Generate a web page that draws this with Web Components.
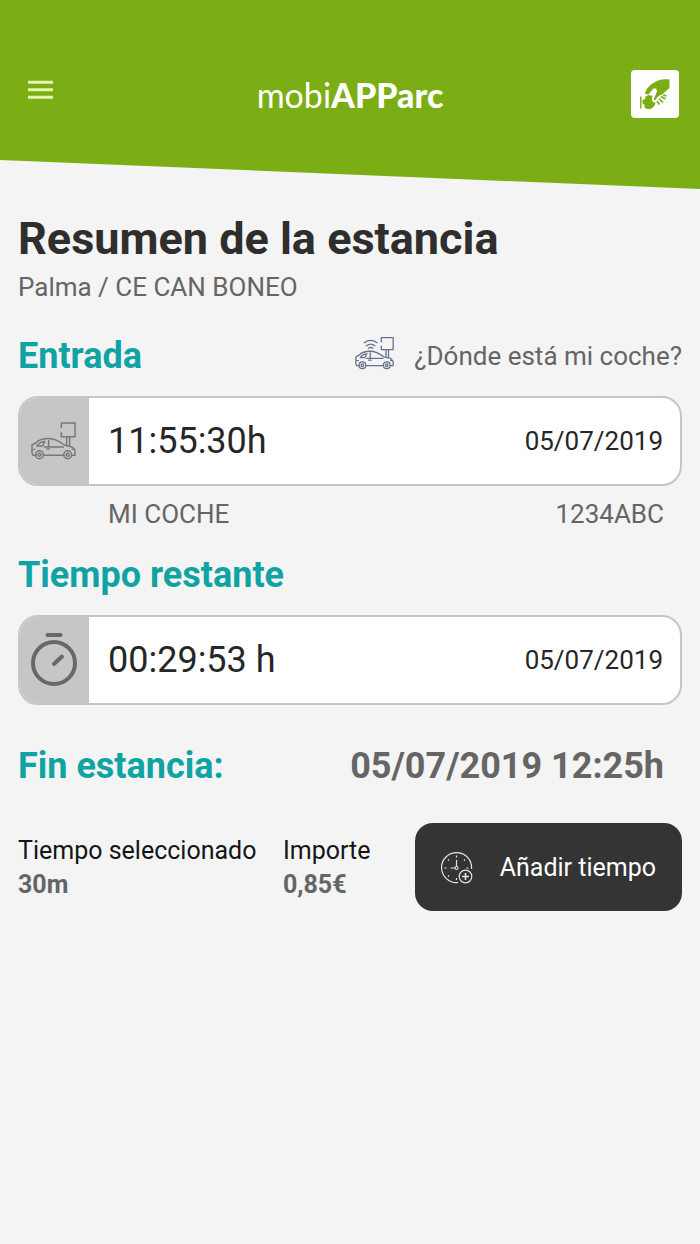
<!DOCTYPE html>
<html lang="es">
<head>
<meta charset="utf-8">
<meta name="viewport" content="width=device-width, initial-scale=1">
<title>mobiAPParc</title>
<style>
html { background: #f4f4f4; }
body { margin: 0; min-height: 100vh; background: #f4f4f4; font-family: Roboto, "Noto Sans", sans-serif; color: #2b2b2b; }
</style>
</head>
<body>
<parking-summary></parking-summary>

<template id="app-header">
<style>
:host { display: block; }
header { box-sizing: border-box; height: 189px; padding: 70px 21px 0 28px; display: grid; grid-template-columns: 1fr auto 1fr; align-items: start; background: #7bae14; clip-path: polygon(0 0, 100% 0, 100% 100%, 0 160px); }
button { border: 0; padding: 0; background: none; display: block; justify-self: start; }
.menu { padding: 10px 0; }
.op { justify-self: end; width: 48px; height: 48px; border-radius: 4px; background: #fff; }
svg { display: block; }
.logo { font: 400 34px/50px Lato, "Open Sans", sans-serif; color: #fff; margin-right: 7px; }
.logo b { font-weight: 900; }
</style>
<header>
  <button class="menu" aria-label="Menú"><svg width="25" height="20"><path d="M0 2.2h25M0 9.7h25M0 17.2h25" stroke="#e4f8b4" stroke-width="3"/></svg></button>
  <div class="logo">mobi<b>APParc</b></div>
  <button class="op" aria-label="Operador"><svg width="48" height="48" viewBox="0 0 48 48">
    <path d="M14 24C15 18 19 15 24 12C29 9 33 9 38.500 9.500V18L31 24.500C28 25 26 27 25 29.500C24 31 22.500 30 23 28.500L26 21.500C26 18.500 24 17.500 22 19L17.500 24.500Z" fill="#7bae14"/>
    <path d="M14.500 26.500C17 24.500 20 25 21.500 26C20 29.500 21 32 24.500 33C23 39 17 40.500 13.500 37.500V35L11.500 33.500V30L14 29Z" fill="#7bae14"/>
    <path d="M9.800 26.500V38.500" stroke="#7bae14" stroke-width="1.500"/>
    <path d="M26 31L28.500 34.500M28 28.500L32 32.500M30 26.500L34.500 29M32 25L35.500 26" stroke="#7bae14" stroke-width="1.700" fill="none"/>
  </svg></button>
</header>
</template>

<template id="car-icon">
<style>
:host { display: block; color: #777; }
svg { display: block; width: 100%; }
.wifi { display: none; }
:host([wifi]) .wifi { display: inline; }
</style>
<svg viewBox="0 0 46 40" fill="none" stroke="currentColor" stroke-width="1.500" stroke-linejoin="round" stroke-linecap="round" aria-hidden="true">
  <path d="M31 7V2H45V16H31V12M36.500 16V24M39.500 16V25"/>
  <path d="M5 35H2L1 33V24.500L5 22.500C8 19 12 18 18 18C24 18 28 20 34 24.500L42 26.500L45 30V35H42M12.500 35H33.500"/>
  <path d="M6 25.500H12L14 21C10 21 8 23 6 25.500ZM18 20V26.500H33M18 26.500H14M16 28.500H19M2 29H4M42 29H44"/>
  <circle cx="8.700" cy="34.500" r="4"/><circle cx="8.700" cy="34.500" r="1.500"/>
  <circle cx="37.500" cy="34.500" r="4"/><circle cx="37.500" cy="34.500" r="1.500"/>
  <path class="wifi" d="M11 8Q18.500 2.500 26 8M13.500 11.500Q18.500 7.500 23.500 11.500M16 14.500Q18.500 12.500 21 14.500"/>
</svg>
</template>

<template id="time-card">
<style>
:host { display: block; }
.card { box-sizing: border-box; min-height: 90px; display: flex; border: 2px solid #c6c6c6; border-radius: 20px; background: #fff; overflow: hidden; }
.icon { box-sizing: border-box; width: 69px; padding-right: 2px; background: #c6c6c6; display: flex; align-items: center; justify-content: center; }
.body { flex: 1; display: flex; align-items: center; justify-content: space-between; padding: 0 17px 0 19px; }
.time { font-size: 36px; line-height: 44px; color: #262626; }
.date { font-size: 26px; line-height: 32px; color: #262626; }
</style>
<div class="card"><div class="icon"><slot name="icon"></slot></div>
<div class="body"><span class="time"><slot name="time"></slot></span><span class="date"><slot name="date"></slot></span></div></div>
</template>

<template id="section-title">
<style>
:host { display: block; }
h2 { margin: 0; font-size: 36px; line-height: 40px; font-weight: 700; color: #0fa3a3; }
</style>
<h2><slot></slot></h2>
</template>

<template id="add-time">
<style>
:host { display: block; }
button { box-sizing: border-box; width: 100%; min-height: 88px; border: 0; border-radius: 18px; padding: 2px 26px 0; background: #343434; color: #fff; font: 400 25px/32px Roboto, sans-serif; display: flex; align-items: center; justify-content: space-between; }
svg { display: block; }
</style>
<button><svg width="32" height="32" viewBox="0 0 32 32" fill="none" stroke="#e4e4e4" stroke-width="1.200" aria-hidden="true">
  <path d="M17 30.500A15 15 0 1 1 30.500 17"/>
  <path d="M15.500 8V14.500M9.500 16H14" /><circle cx="15.500" cy="16" r="1.500"/>
  <path d="M15.500 3.500V5.500M3.500 16H5.500M25.500 16H27.500M15.500 26V28M7 7.500L8 8.500M24 7.500L23 8.500M7 24.500L8 23.500"/>
  <circle cx="24.500" cy="24.500" r="6.300"/><path d="M24.500 21V28M21 24.500H28" stroke-width="1.600"/>
</svg><slot></slot></button>
</template>

<template id="parking-summary">
<style>
:host { display: block; }
main { padding: 24px 18px 24px; }
h1 { margin: 0; font-size: 45px; line-height: 52px; font-weight: 700; color: #2e2e2e; }
p { margin: 0; }
.place { margin-top: 6px; font-size: 26px; line-height: 32px; color: #656565; }
.row { display: flex; justify-content: space-between; align-items: center; }
.entry { margin: 33px 0 20px; }
.where { display: flex; align-items: center; gap: 20px; font-size: 26px; line-height: 32px; color: #656565; text-decoration: none; }
.where car-icon { width: 39px; margin-bottom: 6px; color: #66708c; }
time-card car-icon { width: 45px; }
.car { padding: 12px 18px 0 90px; font-size: 26px; line-height: 32px; color: #656565; }
.left { margin: 25px 0 20px; }
.end { margin-top: 41px; padding-right: 18px; }
.end b { font-size: 36px; line-height: 40px; color: #656565; }
.foot { margin-top: 37px; display: grid; grid-template-columns: 265fr 132fr 267fr; align-items: center; }
dl { display: contents; }
dl div { padding-top: 2px; }
dt, dd { margin: 0; line-height: 34px; font-size: 25px; white-space: nowrap; }
dt { color: #151515; }
dd { font-weight: 700; color: #656565; }
svg { display: block; }
</style>
<app-header></app-header>
<main>
  <h1>Resumen de la estancia</h1>
  <p class="place">Palma / CE CAN BONEO</p>
  <div class="row entry"><section-title>Entrada</section-title><a class="where" href="#coche"><car-icon wifi></car-icon><span>¿Dónde está mi coche?</span></a></div>
  <time-card><car-icon slot="icon"></car-icon><span slot="time">11:55:30h</span><span slot="date">05/07/2019</span></time-card>
  <div class="row car"><span>MI COCHE</span><span>1234ABC</span></div>
  <section-title class="left">Tiempo restante</section-title>
  <time-card><svg slot="icon" width="48" height="56" viewBox="0 0 48 56" fill="none" stroke="#686868" stroke-width="4" stroke-linecap="round" aria-hidden="true"><circle cx="24" cy="31" r="21"/><path d="M17.500 3H30.500M24 32L32 24.500"/></svg><span slot="time">00:29:53 h</span><span slot="date">05/07/2019</span></time-card>
  <div class="row end"><section-title>Fin estancia:</section-title><b>05/07/2019 12:25h</b></div>
  <div class="foot">
    <dl><div><dt>Tiempo seleccionado</dt><dd>30m</dd></div><div><dt>Importe</dt><dd>0,85€</dd></div></dl>
    <add-time>Añadir tiempo</add-time>
  </div>
</main>
</template>

<script>
for (const name of ["app-header", "car-icon", "time-card", "section-title", "add-time", "parking-summary"]) {
  const template = document.getElementById(name);
  customElements.define(name, class extends HTMLElement {
    constructor() {
      super();
      this.attachShadow({ mode: "open" }).append(template.content.cloneNode(true));
    }
  });
}
</script>
</body>
</html>
